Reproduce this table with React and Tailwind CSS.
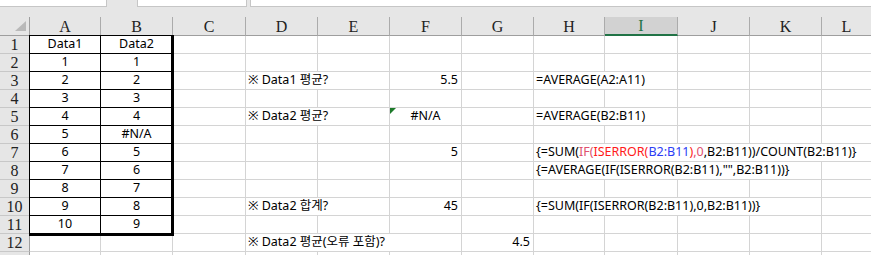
import React from "react";

const COLS = ["A", "B", "C", "D", "E", "F", "G", "H", "I", "J", "K", "L"];

const spanCls = { 1: "", 2: "col-span-2", 3: "col-span-3", 4: "col-span-4", 5: "col-span-5" };

function Formula7() {
  return (
    <span>
      {"{=SUM("}
      <span className="text-[#e0506e]">IF(</span>
      <span className="text-[#ff1a1a]">ISERROR(</span>
      <span className="text-[#2b3cf5]">B2:B11</span>
      <span className="text-[#ff1a1a]">)</span>
      <span className="text-[#e0506e]">,0</span>
      {",B2:B11))/COUNT(B2:B11)}"}
    </span>
  );
}

const rows = {
  1: [{ c: 0, t: "Data1", a: "c" }, { c: 1, t: "Data2", a: "c" }],
  3: [{ c: 3, s: 2, t: "※ Data1 평균?" }, { c: 5, t: "5.5", a: "r" }, { c: 7, s: 2, t: "=AVERAGE(A2:A11)" }],
  5: [{ c: 3, s: 2, t: "※ Data2 평균?" }, { c: 5, t: "#N/A", a: "c", tri: true }, { c: 7, s: 2, t: "=AVERAGE(B2:B11)" }],
  7: [{ c: 5, t: "5", a: "r" }, { c: 7, s: 5, t: <Formula7 /> }],
  8: [{ c: 7, s: 4, t: '{=AVERAGE(IF(ISERROR(B2:B11),"",B2:B11))}' }],
  10: [{ c: 3, s: 2, t: "※ Data2 합계?" }, { c: 5, t: "45", a: "r" }, { c: 7, s: 4, t: "{=SUM(IF(ISERROR(B2:B11),0,B2:B11))}" }],
  12: [{ c: 3, s: 3, t: "※ Data2 평균(오류 포함)?" }, { c: 6, t: "4.5", a: "r" }],
};

const bVals = [1, 2, 3, 4, "#N/A", 5, 6, 7, 8, 9];
for (let i = 0; i < 10; i++) {
  const r = i + 2;
  rows[r] = [{ c: 0, t: String(i + 1), a: "c" }, { c: 1, t: String(bVals[i]), a: "c" }, ...(rows[r] || [])];
}

function Row({ n }) {
  const defs = rows[n] || [];
  const cells = [];
  let c = 0;
  while (c < 12) {
    const d = defs.find((x) => x.c === c);
    const span = d ? d.s || 1 : 1;
    const align = d && d.a === "c" ? "justify-center" : d && d.a === "r" ? "justify-end pr-[3px]" : "justify-start pl-[2px]";
    cells.push(
      <div
        key={c}
        className={`relative flex items-center whitespace-nowrap overflow-visible border-r border-b border-[#d4d4d4] text-[12.5px] leading-none text-black ${spanCls[span]} ${align}`}
      >
        {d && d.tri && (
          <svg className="absolute left-0 top-0" width="6" height="6" viewBox="0 0 6 6">
            <polygon points="0,0 6,0 0,6" fill="#1d7a2a" />
          </svg>
        )}
        {d ? d.t : null}
      </div>
    );
    c += span;
  }
  return (
    <>
      <div className="flex items-center justify-center pt-px border-r border-r-[#9e9e9e] border-b border-b-[#c8c8c8] bg-[#e6e6e6] text-[16px] leading-none text-[#222] font-['Liberation_Serif']">
        {n <= 12 ? n : ""}
      </div>
      {cells}
    </>
  );
}

export default function App() {
  return (
    <div className="w-[871px] h-[255px] overflow-hidden bg-white font-['Noto_Sans','Noto_Sans_CJK_KR',sans-serif]">
      <div className="h-[17px] bg-[#e6e6e6] flex items-start">
        <div className="w-[107px] h-[7px] bg-white border-r border-b border-[#c6c6c6]" />
        <div className="w-[30px]" />
        <div className="w-[110px] h-[7px] bg-white border-l border-r border-b border-[#c6c6c6]" />
        <div className="w-[3px]" />
        <div className="flex-1 h-[7px] bg-white border-l border-b border-[#c6c6c6]" />
      </div>
      <div className="relative grid grid-cols-[30px_71px_72px_73px_72px_72px_72px_72px_71px_73px_72px_72px_50px] grid-rows-[19px_repeat(12,18px)_18px]">
        <div className="relative bg-[#e6e6e6] border-r border-b border-[#9e9e9e]">
          <svg className="absolute left-[15px] top-[4px]" width="11" height="10" viewBox="0 0 11 10">
            <polygon points="0,10 11,10 11,0" fill="#b9b9b9" />
          </svg>
        </div>
        {COLS.map((l) => (
          <div
            key={l}
            className={
              l === "I"
                ? "flex items-center justify-center pt-px bg-[#d2d2d2] border-r border-r-[#ababab] border-b-2 border-b-[#217346] text-[#217346] text-[16px] leading-none font-['Liberation_Serif']"
                : "flex items-center justify-center pt-px bg-[#e6e6e6] border-r border-r-[#ababab] border-b border-b-[#9e9e9e] text-[16px] leading-none text-[#222] font-['Liberation_Serif']"
            }
          >
            {l}
          </div>
        ))}
        {Array.from({ length: 13 }, (_, i) => (
          <Row key={i + 1} n={i + 1} />
        ))}
        <div className="pointer-events-none absolute left-[29px] top-[18px] w-[145px] h-[201px] border-l border-t border-r-[3px] border-b-[3px] border-black" />
        <div className="pointer-events-none absolute left-[100px] top-[18px] w-px h-[198px] bg-black" />
        {Array.from({ length: 10 }, (_, i) => (
          <div key={i} className="pointer-events-none absolute left-[29px] w-[143px] h-px bg-black" style={{ top: 36 + i * 18 }} />
        ))}
      </div>
    </div>
  );
}
